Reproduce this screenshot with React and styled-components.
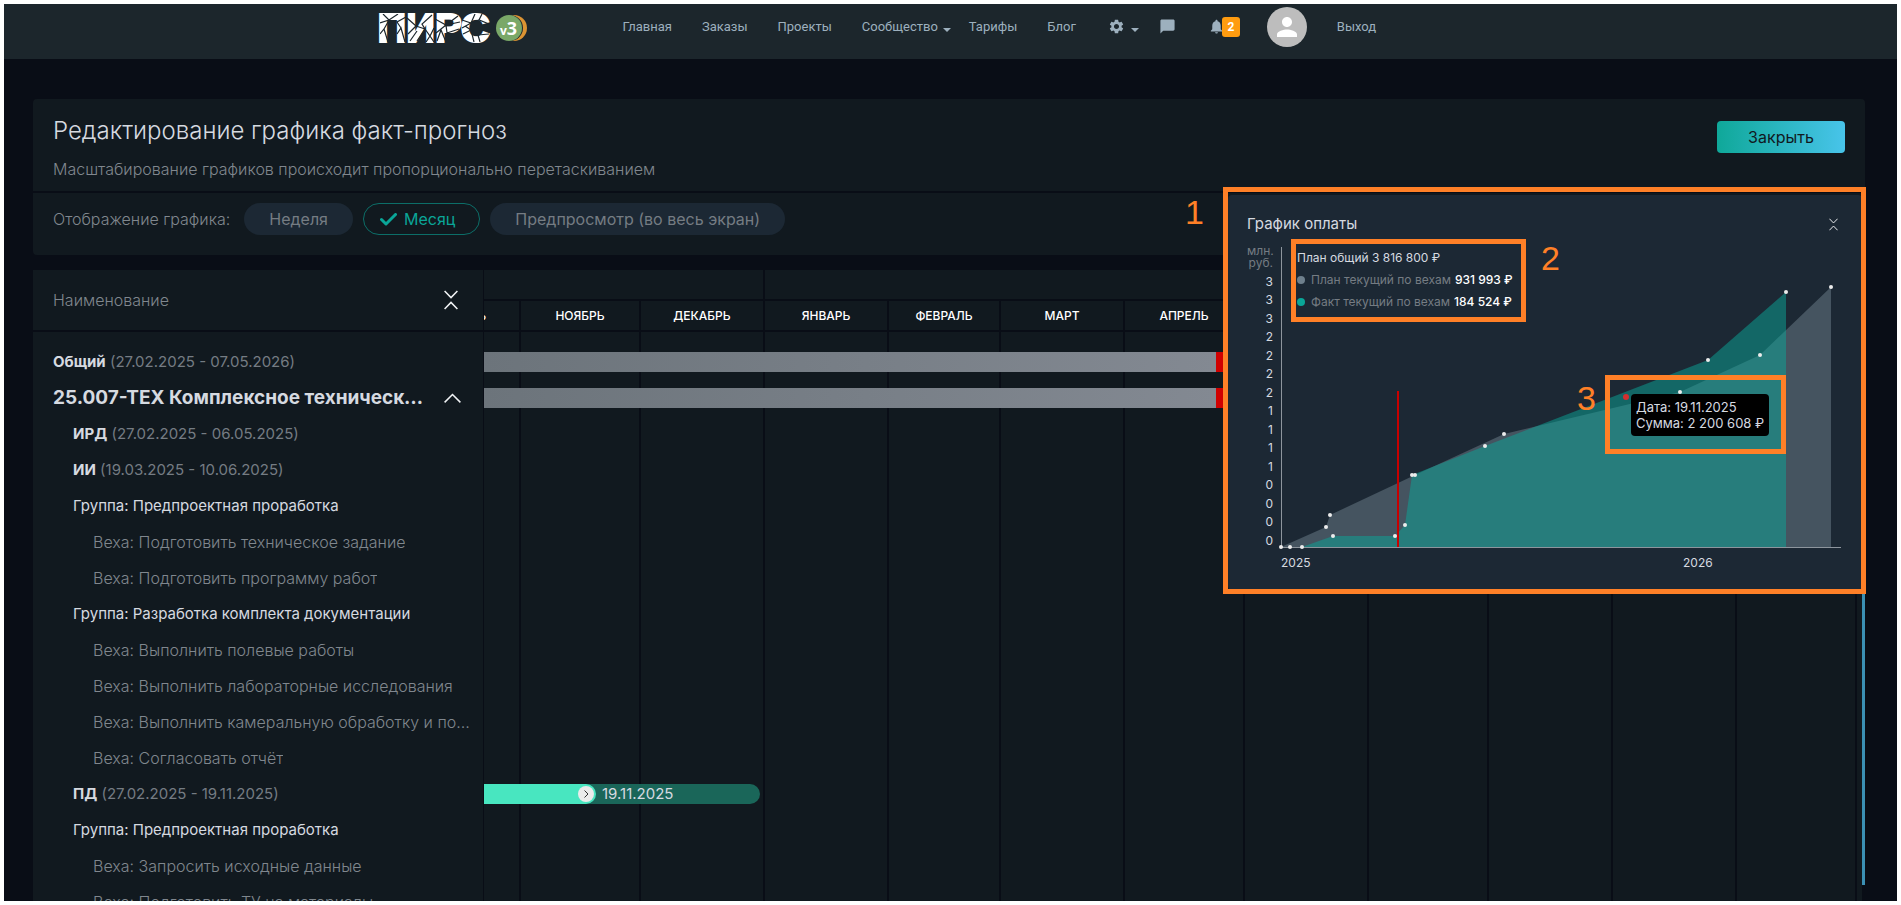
import React from 'react';
import styled, { createGlobalStyle, css } from 'styled-components';
import { MdSettings, MdChatBubble, MdNotifications, MdPerson } from 'react-icons/md';

const colors = {
  page: '#090d16',
  header: '#1c262c',
  card: '#11191f',
  raised: '#1c2834',
  text: '#d6dae0',
  white: '#f1f3f5',
  muted: '#757c83',
  mutedLight: '#80878e',
  nav: '#9db0be',
  teal: '#0aa698',
  mark: '#ff8027',
};

const GlobalStyle = createGlobalStyle`
  * {
    box-sizing: border-box;
  }
  body {
    margin: 0;
    background: #fff;
    color: ${colors.text};
    font: 15px/20px Inter, 'Open Sans', sans-serif;
  }
  button {
    margin: 0;
    padding: 0;
    border: 0;
    background: none;
    color: inherit;
    font: inherit;
    cursor: pointer;
  }
`;

const Frame = styled.div`
  height: 100vh;
  overflow: hidden;
  border: 4px solid #fff;
  background: ${colors.page};
`;

/* Header */

const Header = styled.header`
  height: 55px;
  background: ${colors.header};
`;
const HeaderInner = styled.div`
  display: flex;
  align-items: flex-start;
  max-width: 1170px;
  margin: 0 auto;
  padding: 0 12px;
`;
const Logo = styled.a`
  position: relative;
  display: flex;
  align-items: center;
  width: 150px;
  height: 48px;
  color: #fff;
  font: bold 40px/48px 'Liberation Sans', Arial, sans-serif;
  text-decoration: none;
`;
const LogoWord = styled.span`
  -webkit-text-stroke: 2px #fff;
`;
const LogoCracks = styled.svg`
  position: absolute;
  left: 2px;
  top: 10px;
`;
const Version = styled.span`
  position: absolute;
  left: 118px;
  top: 11px;
  width: 26px;
  height: 26px;
  border-radius: 50%;
  background: #7aa868;
  box-shadow: 1px 0 0 ${colors.header}, 5px 0 0 #dc9433;
  font: bold 18px/26px 'Open Sans', sans-serif;
  text-align: center;
`;
const VersionPrefix = styled.small`
  font-size: 12px;
`;
const Nav = styled.nav`
  display: flex;
  align-items: center;
  height: 45px;
  margin-left: 80px;
  color: ${colors.nav};
  font: 13px/20px Roboto, sans-serif;
`;
const NavLink = styled.a`
  display: flex;
  align-items: center;
  gap: 5px;
  padding: 0 ${({ $right = '15px' }) => $right} 0 15px;
  color: inherit;
  text-decoration: none;
`;
const NavIcon = styled(NavLink)`
  padding-left: 17px;
  gap: 6px;
`;
const Caret = styled.span`
  border: 4px solid transparent;
  border-top-color: currentColor;
  border-bottom: 0;
  margin-top: 6px;
`;
const Badge = styled.span`
  margin-left: -9px;
  width: 18px;
  border-radius: 3px;
  background: #ff9c10;
  color: #fff;
  font: bold 12px/20px Roboto, sans-serif;
  text-align: center;
`;
const Avatar = styled.span`
  display: flex;
  align-items: center;
  justify-content: center;
  width: 40px;
  height: 40px;
  border-radius: 50%;
  background: #bdbdbd;
  color: #fff;
`;

/* Page */

const Main = styled.main`
  position: relative;
  margin: 40px 32px 0 29px;
`;
const Card = styled.section`
  border-radius: 4px;
  background: ${colors.card};
`;
const CardTop = styled.div`
  display: flex;
  justify-content: space-between;
  align-items: flex-start;
  height: 94px;
  padding: 20px;
  border-bottom: 2px solid ${colors.page};
`;
const Title = styled.h1`
  margin: -4px 0 12px;
  font-size: 24px;
  line-height: 32px;
  font-weight: 300;
`;
const Muted = styled.span`
  color: ${colors.muted};
`;
const Hint = styled.span`
  color: ${colors.mutedLight};
  font-size: 16px;
  font-weight: 300;
`;
const CloseButton = styled.button`
  width: 128px;
  height: 32px;
  margin-top: 2px;
  border-radius: 4px;
  background: linear-gradient(90deg, #0fa899, #48c4ea);
  color: ${colors.card};
  font-size: 16px;
`;
const ViewBar = styled.div`
  display: flex;
  align-items: center;
  gap: 10px;
  height: 62px;
  padding: 0 20px 10px;
`;
const ViewLabel = styled(Hint)`
  margin-right: 4px;
`;
const Pill = styled.button`
  display: flex;
  align-items: center;
  gap: 7px;
  height: 32px;
  padding: 0 25px;
  border-radius: 16px;
  background: ${colors.raised};
  color: ${colors.muted};
  font-size: 16px;
  ${({ $active }) =>
    $active &&
    css`
      padding: 0 24px 0 16px;
      border: 1px solid #0c6e68;
      background: none;
      color: ${colors.teal};
    `}
`;

/* Gantt */

const Gantt = styled.section`
  display: flex;
  height: 640px;
  margin-top: 15px;
  padding-right: 3px;
`;
const Names = styled.div`
  flex: 0 0 451px;
  min-width: 0;
  border-right: 1px solid ${colors.page};
  background: ${colors.card};
`;
const NamesHead = styled.div`
  display: flex;
  align-items: center;
  justify-content: space-between;
  height: 62px;
  padding: 0 25px 0 20px;
  border-bottom: 2px solid ${colors.page};
`;
const IconButton = styled.button`
  display: flex;
  color: ${colors.white};
`;
const Rows = styled.div`
  padding-top: 12px;
`;
const NameRow = styled.div`
  display: flex;
  align-items: center;
  justify-content: space-between;
  gap: 20px;
  height: 36px;
  padding: 0 ${({ $kind }) => ($kind === 'project' ? 22 : 12)}px 0 ${({ $level }) => 20 + $level * 20}px;
`;
const nameKinds = {
  stage: css``,
  group: css``,
  project: css`
    font-size: 19px;
    line-height: 26px;
    font-weight: 700;
  `,
  step: css`
    color: ${colors.mutedLight};
    font-size: 16px;
    font-weight: 300;
  `,
};
const NameText = styled.div`
  overflow: hidden;
  white-space: nowrap;
  text-overflow: ellipsis;
  ${({ $kind }) => nameKinds[$kind]}
`;
const Timeline = styled.div`
  flex: 1;
  min-width: 0;
  overflow: hidden;
  background: ${colors.card};
`;
const Calendar = styled.div`
  position: relative;
  display: flex;
  width: max-content;
  height: 100%;
  margin-left: -87px;
`;
const YearHead = styled.div`
  height: 31px;
  border: 0 solid ${colors.page};
  border-width: 0 2px 2px 0;
`;
const Months = styled.div`
  display: flex;
  height: 609px;
`;
const Month = styled.div`
  width: ${({ $days }) => $days * 4}px;
  border-right: 2px solid ${colors.page};
`;
const MonthHead = styled.div`
  height: 31px;
  border-bottom: 2px solid ${colors.page};
  color: #fff;
  font-size: 12px;
  line-height: 29px;
  font-weight: 500;
  text-align: center;
  text-transform: uppercase;
`;
const Bars = styled.div`
  position: absolute;
  inset: 74px 0 auto 87px;
`;
const BarRow = styled.div`
  display: flex;
  align-items: center;
  height: 36px;
`;
const PlanBar = styled.div`
  width: 732px;
  height: 20px;
  background: linear-gradient(90deg, #6c747b, #838992);
`;
const OverdueBar = styled.div`
  width: 28px;
  height: 20px;
  background: #d00000;
`;
const StageBar = styled.div`
  display: flex;
  align-items: center;
  gap: 6px;
  width: 276px;
  height: 20px;
  border-radius: 0 10px 10px 0;
  background: #1a6659;
`;
const StageDone = styled.div`
  display: flex;
  align-items: center;
  justify-content: flex-end;
  width: 112px;
  height: 20px;
  padding-right: 2px;
  border-radius: 0 10px 10px 0;
  background: #48e6c0;
`;
const Knob = styled.button`
  display: flex;
  align-items: center;
  justify-content: center;
  width: 16px;
  height: 16px;
  border-radius: 50%;
  background: #ebebeb;
  color: #333;
`;
const ScrollThumb = styled.div`
  position: absolute;
  top: 171px;
  right: 0;
  width: 3px;
  height: 615px;
  background: #3b90b4;
`;

/* Payment chart */

const Popup = styled.section`
  position: absolute;
  top: 96px;
  right: 3px;
  width: 634px;
  height: 395px;
  padding: 19px 19px 0;
  border-radius: 4px;
  background: ${colors.raised};
`;
const PopupHead = styled.div`
  display: flex;
  align-items: center;
  justify-content: space-between;
  padding-right: 5px;
`;
const PopupTitle = styled.h2`
  margin: 0;
  font-size: 15px;
  line-height: 20px;
  font-weight: 400;
`;
const Chart = styled.div`
  display: grid;
  grid-template-columns: 34px 560px;
  margin-top: 13px;
  font-size: 12px;
  line-height: 12px;
`;
const YLabels = styled.div`
  display: flex;
  flex-direction: column;
  justify-content: space-between;
  margin-top: -2px;
  padding-right: 8px;
  text-align: right;
`;
const Plot = styled.div`
  position: relative;
  height: 300px;
  border-left: 1px solid #8d959d;
`;
const PlotArea = styled.svg`
  position: absolute;
  left: -1px;
  top: 0;
  overflow: visible;
`;
const Legend = styled.div`
  position: absolute;
  left: 15px;
  top: 0;
  font-size: 12px;
  line-height: 22px;
  white-space: nowrap;
`;
const LegendRow = styled.div`
  display: flex;
  align-items: center;
  gap: 4px;
  color: ${({ $dot }) => ($dot ? colors.muted : colors.text)};
`;
const Dot = styled.span`
  width: 8px;
  height: 8px;
  margin-right: 2px;
  border-radius: 50%;
  background: ${({ $color }) => $color};
`;
const Sum = styled.span`
  color: #fff;
  font-weight: 500;
`;
const Tooltip = styled.div`
  position: absolute;
  left: 349px;
  top: 147px;
  padding: 5px;
  border-radius: 4px;
  background: #000;
  font-size: 13px;
  line-height: 16px;
  white-space: nowrap;
`;
const XLabels = styled.div`
  grid-column: 2;
  display: grid;
  grid-template-columns: 402px 1fr;
  padding-top: 10px;
`;

/* Numbered callouts over the chart */

const Callout = styled.div`
  position: absolute;
  left: ${({ $x }) => $x}px;
  top: ${({ $y }) => $y}px;
  width: ${({ $w }) => $w}px;
  height: ${({ $h }) => $h}px;
  border: 5px solid ${colors.mark};
  pointer-events: none;
`;
const CalloutNumber = styled.span`
  position: absolute;
  left: ${({ $x }) => $x}px;
  top: ${({ $y }) => $y}px;
  color: ${colors.mark};
  font: 34px/34px 'Liberation Sans', Arial, sans-serif;
`;

const years = [
  [
    { name: 'Октябрь', days: 31 },
    { name: 'Ноябрь', days: 30 },
    { name: 'Декабрь', days: 31 },
  ],
  [
    { name: 'Январь', days: 31 },
    { name: 'Февраль', days: 28 },
    { name: 'Март', days: 31 },
    { name: 'Апрель', days: 30 },
    { name: 'Май', days: 31 },
    { name: 'Июнь', days: 30 },
    { name: 'Июль', days: 31 },
    { name: 'Август', days: 31 },
    { name: 'Сентябрь', days: 30 },
  ],
];

const rows = [
  { kind: 'stage', level: 0, name: 'Общий', dates: '(27.02.2025 - 07.05.2026)' },
  { kind: 'project', level: 0, name: '25.007-ТЕХ Комплексное техническое обследование' },
  { kind: 'stage', level: 1, name: 'ИРД', dates: '(27.02.2025 - 06.05.2025)' },
  { kind: 'stage', level: 1, name: 'ИИ', dates: '(19.03.2025 - 10.06.2025)' },
  { kind: 'group', level: 1, name: 'Группа: Предпроектная проработка' },
  { kind: 'step', level: 2, name: 'Веха: Подготовить техническое задание' },
  { kind: 'step', level: 2, name: 'Веха: Подготовить программу работ' },
  { kind: 'group', level: 1, name: 'Группа: Разработка комплекта документации' },
  { kind: 'step', level: 2, name: 'Веха: Выполнить полевые работы' },
  { kind: 'step', level: 2, name: 'Веха: Выполнить лабораторные исследования' },
  { kind: 'step', level: 2, name: 'Веха: Выполнить камеральную обработку и подготовку' },
  { kind: 'step', level: 2, name: 'Веха: Согласовать отчёт' },
  { kind: 'stage', level: 1, name: 'ПД', dates: '(27.02.2025 - 19.11.2025)', done: '19.11.2025' },
  { kind: 'group', level: 1, name: 'Группа: Предпроектная проработка' },
  { kind: 'step', level: 2, name: 'Веха: Запросить исходные данные' },
  { kind: 'step', level: 2, name: 'Веха: Подготовить ТУ на материалы' },
];

const ticks = [3, 3, 3, 2, 2, 2, 2, 1, 1, 1, 1, 0, 0, 0, 0];
const plan = [[0, 300], [45, 280], [49, 268], [134, 228], [223, 187], [399, 145], [479, 108], [550, 40]];
const fact = [[9, 300], [21, 300], [52, 289], [114, 289], [124, 278], [131, 228], [204, 199], [427, 113], [505, 45]];

const area = points => {
  const last = points[points.length - 1];
  return [...points, [last[0], 300]].map(p => p.join(',')).join(' ');
};

const CollapseIcon = ({ width, height }) => (
  <svg width={width} height={height} viewBox="0 0 14 20" fill="none" stroke="currentColor" strokeWidth="1.5">
    <path d="M.6 1 7 7.6 13.4 1M.6 19 7 12.4 13.4 19" />
  </svg>
);

const PirsLogo = () => (
  <Logo href="#">
    <LogoWord>ПИРС</LogoWord>
    <LogoCracks width="112" height="28" viewBox="0 0 112 28" fill="none" stroke={colors.header} strokeWidth="1.2">
      <path d="M0 9 9 6 18 0M9 6 3 0M9 6l3 4M0 20l4-5 4 13M4 15 8 8M17 20l4-6 4 14M21 14l-4-6 9-5" />
      <path d="M27 4l9 8 9 3M36 12l-8 8M30 27l7-10M45 15l-8 12M45 15l-3-5 10-9M45 15l5 7 4-8M46 28l4-6 4 6" />
      <path d="M55 5l11 6L78 2M66 11l14-3M66 11l-10 8M66 11l1 8M57 27l4-11 5 12M67 19l12-4" />
      <path d="M82 6l9 3 4-9M91 9l-9 5M91 9l8-3 10 4M99 6l3-6M83 20l8-4 3 12M91 16l-6-4M91 16l7 5 11-1M98 21l2 7" />
    </LogoCracks>
    <Version>
      <VersionPrefix>v</VersionPrefix>3
    </Version>
  </Logo>
);

const GanttCalendar = ({ months }) => (
  <div>
    <YearHead />
    <Months>
      {months.map(({ name, days }) => (
        <Month key={name} $days={days}>
          <MonthHead>{name}</MonthHead>
        </Month>
      ))}
    </Months>
  </div>
);

const PaymentChart = () => (
  <Popup>
    <PopupHead>
      <PopupTitle>График оплаты</PopupTitle>
      <IconButton aria-label="Свернуть график">
        <CollapseIcon width={9} height={13} />
      </IconButton>
    </PopupHead>
    <Chart>
      <YLabels>
        <Muted>
          млн.
          <br />
          руб.
        </Muted>
        {ticks.map((tick, i) => (
          <span key={i}>{tick}</span>
        ))}
      </YLabels>
      <Plot>
        <PlotArea width="560" height="301" viewBox="0 0 560 301">
          <polygon points={area(plan)} fill="#6e7f8c" fillOpacity=".5" />
          <polygon points={area(fact)} fill={colors.teal} fillOpacity=".5" />
          <path d="M0 300.5H560" stroke="#8d959d" />
          <path d="M117 144V300" stroke="#c80000" strokeWidth="2" />
          {[...plan, ...fact].map(([x, y]) => (
            <circle key={`${x}-${y}`} cx={x} cy={y} r="2" fill="#ececec" />
          ))}
          <circle cx="345" cy="150" r="3" fill="#d32f2f" />
        </PlotArea>
        <Legend>
          <LegendRow>План общий 3 816 800 ₽</LegendRow>
          <LegendRow $dot>
            <Dot $color="#6e7f8c" />
            План текущий по вехам <Sum>931 993 ₽</Sum>
          </LegendRow>
          <LegendRow $dot>
            <Dot $color={colors.teal} />
            Факт текущий по вехам <Sum>184 524 ₽</Sum>
          </LegendRow>
        </Legend>
        <Tooltip>
          Дата: 19.11.2025
          <br />
          Сумма: 2 200 608 ₽
        </Tooltip>
      </Plot>
      <XLabels>
        <span>2025</span>
        <span>2026</span>
      </XLabels>
    </Chart>
    <Callout $x={-5} $y={-8} $w={643} $h={407} />
    <CalloutNumber $x={-43} $y={0}>1</CalloutNumber>
    <Callout $x={63} $y={44} $w={235} $h={83} />
    <CalloutNumber $x={313} $y={46}>2</CalloutNumber>
    <Callout $x={377} $y={180} $w={181} $h={79} />
    <CalloutNumber $x={349} $y={186}>3</CalloutNumber>
  </Popup>
);

const App = () => (
  <Frame>
    <GlobalStyle />
    <Header>
      <HeaderInner>
        <PirsLogo />
        <Nav>
          <NavLink href="#">Главная</NavLink>
          <NavLink href="#">Заказы</NavLink>
          <NavLink href="#">Проекты</NavLink>
          <NavLink href="#" $right="3px">
            Сообщество <Caret />
          </NavLink>
          <NavLink href="#">Тарифы</NavLink>
          <NavLink href="#">Блог</NavLink>
          <NavIcon href="#" $right="3px">
            <MdSettings size={17} /> <Caret />
          </NavIcon>
          <NavIcon href="#">
            <MdChatBubble size={17} />
          </NavIcon>
          <NavIcon href="#" $right="12px">
            <MdNotifications size={17} />
            <Badge>2</Badge>
          </NavIcon>
          <NavLink href="#">
            <Avatar>
              <MdPerson size={30} />
            </Avatar>
          </NavLink>
          <NavLink href="#">Выход</NavLink>
        </Nav>
      </HeaderInner>
    </Header>
    <Main>
      <Card>
        <CardTop>
          <div>
            <Title>Редактирование графика факт-прогноз</Title>
            <Hint>Масштабирование графиков происходит пропорционально перетаскиванием</Hint>
          </div>
          <CloseButton>Закрыть</CloseButton>
        </CardTop>
        <ViewBar>
          <ViewLabel>Отображение графика:</ViewLabel>
          <Pill>Неделя</Pill>
          <Pill $active>
            <svg width="17" height="13" viewBox="0 0 17 13" fill="none" stroke="currentColor" strokeWidth="3">
              <path d="M1.5 6.5 6 11 15.5 1.5" strokeLinecap="round" strokeLinejoin="round" />
            </svg>
            Месяц
          </Pill>
          <Pill>Предпросмотр (во весь экран)</Pill>
        </ViewBar>
      </Card>
      <Gantt>
        <Names>
          <NamesHead>
            <Hint>Наименование</Hint>
            <IconButton aria-label="Свернуть всё">
              <CollapseIcon width={14} height={20} />
            </IconButton>
          </NamesHead>
          <Rows>
            {rows.map(({ kind, level, name, dates }, i) => (
              <NameRow key={i} $level={level} $kind={kind}>
                <NameText $kind={kind}>
                  {dates ? <strong>{name}</strong> : name} {dates && <Muted>{dates}</Muted>}
                </NameText>
                {kind === 'project' && (
                  <IconButton aria-label="Свернуть">
                    <svg width="17" height="10" viewBox="0 0 17 10" fill="none" stroke="currentColor" strokeWidth="1.5">
                      <path d="M.6 9.4 8.5 1.5l7.9 7.9" />
                    </svg>
                  </IconButton>
                )}
              </NameRow>
            ))}
          </Rows>
        </Names>
        <Timeline>
          <Calendar>
            {years.map((months, i) => (
              <GanttCalendar key={i} months={months} />
            ))}
            <Bars>
              {rows.map(({ done }, i) => (
                <BarRow key={i}>
                  {i < 2 && (
                    <>
                      <PlanBar />
                      <OverdueBar />
                    </>
                  )}
                  {done && (
                    <StageBar>
                      <StageDone>
                        <Knob aria-label="Изменить срок">
                          <svg width="5" height="8" viewBox="0 0 5 8" fill="none" stroke="currentColor">
                            <path d="M.5.5 4 4 .5 7.5" />
                          </svg>
                        </Knob>
                      </StageDone>
                      {done}
                    </StageBar>
                  )}
                </BarRow>
              ))}
            </Bars>
          </Calendar>
        </Timeline>
      </Gantt>
      <ScrollThumb />
      <PaymentChart />
    </Main>
  </Frame>
);

export default App;
